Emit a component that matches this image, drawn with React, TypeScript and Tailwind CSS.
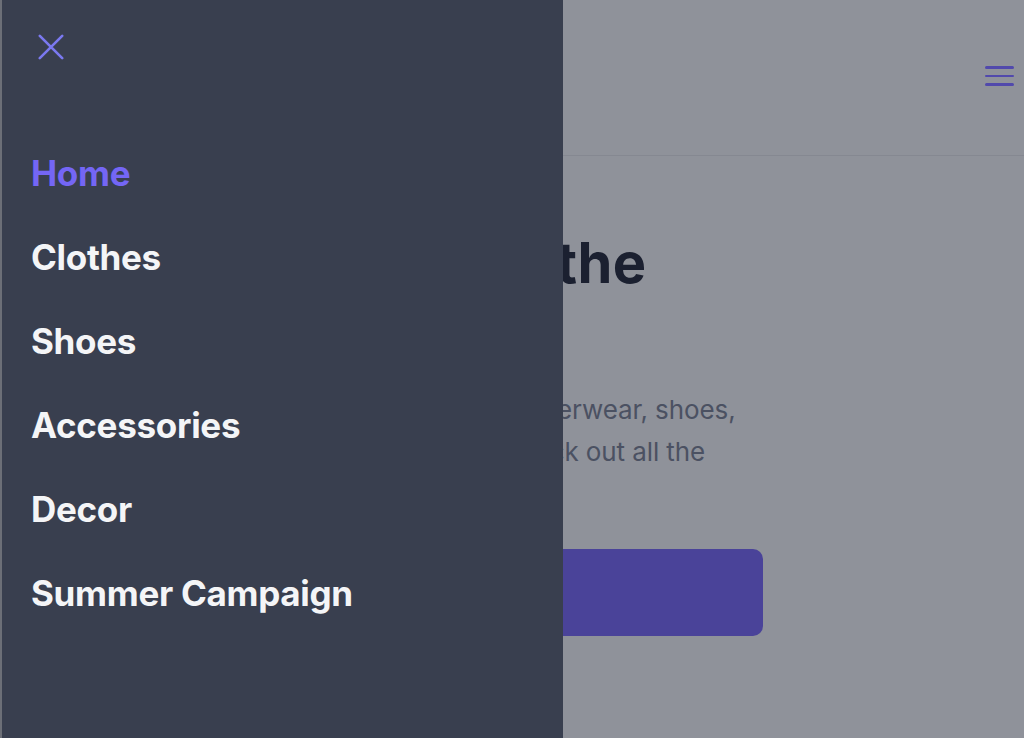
import { useState } from 'react'

const links = ['Home', 'Clothes', 'Shoes', 'Accessories', 'Decor', 'Summer Campaign']

export default function App() {
  const [open, setOpen] = useState(true)
  const [active, setActive] = useState('Home')

  return (
    <div className="relative h-[738px] w-[1024px] overflow-hidden bg-[#8f929a]" style={{ fontFamily: 'Inter, "Noto Sans", sans-serif' }}>
      {/* page behind the overlay */}
      <header className="flex h-[156px] items-start justify-end border-b border-[#858891] pr-[10px] pt-[66px]">
        <button onClick={() => setOpen(true)} className="flex w-[29px] flex-col gap-[6px]" aria-label="Open menu">
          <span className="h-[2.5px] w-full rounded-full bg-[#5149ac]" />
          <span className="h-[2.5px] w-full rounded-full bg-[#5149ac]" />
          <span className="h-[2.5px] w-full rounded-full bg-[#5149ac]" />
        </button>
      </header>

      <main className="pl-[400px] pt-[75px]">
        <h1 className="whitespace-nowrap text-[56px] font-bold leading-[64px] tracking-[0.4px] text-[#1b2030]">
          Shop the
        </h1>
        <p className="mt-[94px] whitespace-nowrap text-[26px] leading-[42px] tracking-[-0.1px] text-[#4b5162]">
          Shop our outerwear, shoes,
          <br />
          jackets. Check out all the
        </p>
        <button className="mt-[76px] flex h-[87px] w-[363px] items-center rounded-[10px] bg-[#4a4399] pl-[24px] text-[26px] font-semibold text-[#9a98c8]">
          Shop now
        </button>
      </main>

      {/* drawer */}
      {open && (
        <nav className="absolute inset-y-0 left-0 flex w-[563px] flex-col border-l-2 border-[#6c6f77] bg-[#393f4f]">
          <button onClick={() => setOpen(false)} className="ml-[36px] mt-[34px] h-[26px] w-[26px]" aria-label="Close menu">
            <svg viewBox="0 0 26 26" className="h-[26px] w-[26px]" fill="none" stroke="#7b79f0" strokeWidth="2.6" strokeLinecap="round">
              <path d="M1.8 1.8 24.2 24.2M24.2 1.8 1.8 24.2" />
            </svg>
          </button>
          <ul className="mt-[91px] flex flex-col gap-[40px] pl-[29px]">
            {links.map((l) => (
              <li key={l}>
                <a
                  href="#"
                  onClick={() => setActive(l)}
                  className={
                    'text-[35px] font-bold leading-[44px] tracking-[-0.3px] ' +
                    (active === l ? 'text-[#7466f5]' : 'text-[#f4f5f7]')
                  }
                >
                  {l}
                </a>
              </li>
            ))}
          </ul>
        </nav>
      )}
    </div>
  )
}
